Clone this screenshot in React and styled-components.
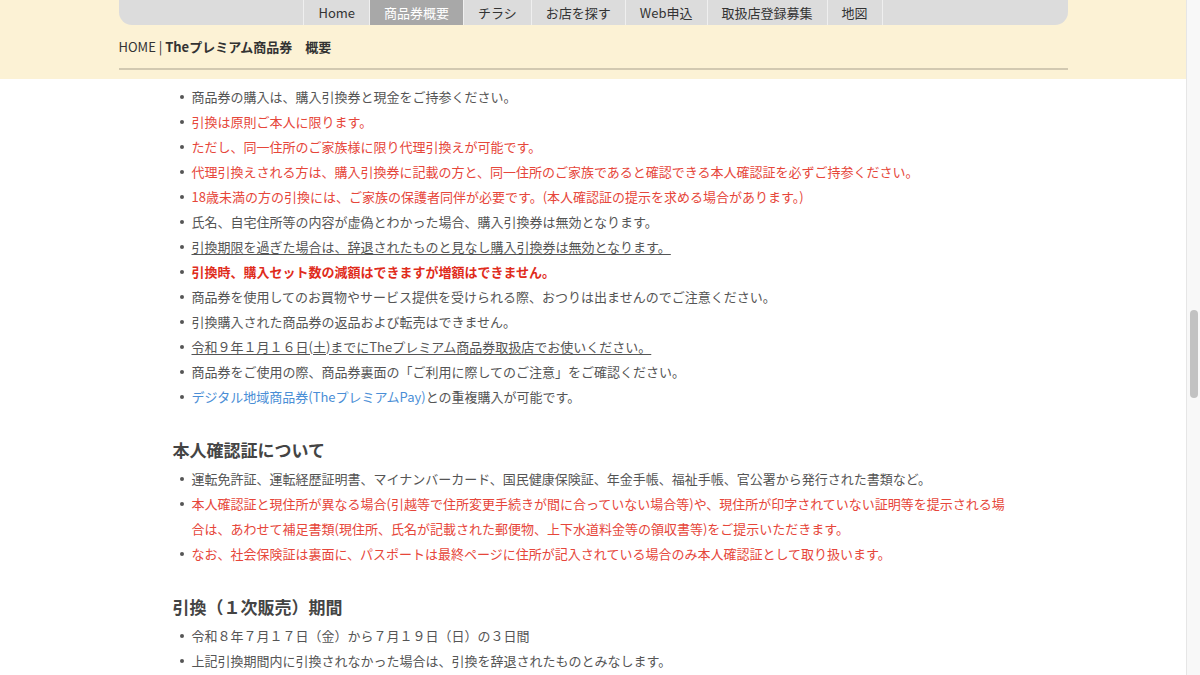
import React from 'react';
import styled, { createGlobalStyle } from 'styled-components';

const GlobalStyle = createGlobalStyle`
  html, body {
    margin: 0;
    padding: 0;
    background: #ffffff;
    font-family: "Noto Sans CJK JP", "Noto Sans", sans-serif;
  }
`;

// ページ全体: 本文 + スクロールバー
const Page = styled.div`
  display: flex;
  width: 1200px;
  height: 675px;
  overflow: hidden;
`;

const Main = styled.div`
  flex: 1;
  display: flex;
  flex-direction: column;
  min-width: 0;
`;

// 上部の黄色いヘッダー
const Header = styled.header`
  background: #fcf2d5;
  padding-bottom: 9px;
`;

const Inner = styled.div`
  width: 949px;
  margin: 0 auto;
`;

const NavBar = styled.nav`
  display: flex;
  justify-content: center;
  height: 25px;
  background: #dcdcdc;
  border-radius: 0 0 13px 13px;
`;

const NavItem = styled.div`
  display: flex;
  align-items: center;
  padding: 0 14px;
  font-size: 13px;
  color: ${(p) => (p.$active ? '#ffffff' : '#333333')};
  background: ${(p) => (p.$active ? '#a8a8a8' : 'transparent')};
  border-left: 1px solid #efefef;

  &:last-child {
    border-right: 1px solid #efefef;
  }
`;

const Breadcrumb = styled.div`
  margin-top: 9px;
  line-height: 25px;
  font-size: 13px;
  color: #333333;
`;

const Current = styled.span`
  font-weight: 700;
`;

const Rule = styled.div`
  margin-top: 9px;
  height: 2px;
  background: #d2c9b1;
`;

// 本文
const Content = styled.div`
  width: 949px;
  margin: 0 auto;
  padding: 5px 56px 0 54px;
  box-sizing: border-box;
`;

const Heading = styled.h3`
  margin: 28px 0 4px;
  font-size: 17px;
  line-height: 25px;
  font-weight: 700;
  color: #444444;
`;

const List = styled.ul`
  list-style: none;
  margin: 0;
  padding: 0;
`;

const Item = styled.li`
  display: flex;
  font-size: 13px;
  line-height: 25px;
  color: #555555;
`;

const Bullet = styled.span`
  flex: 0 0 19px;
  height: 25px;
  display: flex;
  align-items: center;

  &::before {
    content: '';
    width: 4px;
    height: 4px;
    margin-left: 7px;
    border-radius: 50%;
    background: #555555;
  }
`;

const Text = styled.span`
  flex: 1;
  min-width: 0;
  color: ${(p) => (p.$tone === 'red' ? '#e6463a' : p.$tone === 'strong' ? '#e02c1c' : '#555555')};
  font-weight: ${(p) => (p.$tone === 'strong' ? 700 : 400)};
  text-decoration: ${(p) => (p.$underline ? 'underline' : 'none')};
  text-underline-offset: 2px;
`;

const Link = styled.span`
  color: #4a8ed6;
`;

// スクロールバー
const Scrollbar = styled.div`
  width: 13px;
  background: #f8f8f8;
  border-left: 1px solid #e6e6e6;
  padding-top: 310px;
  display: flex;
  justify-content: center;
`;

const Thumb = styled.div`
  width: 8px;
  height: 88px;
  border-radius: 4px;
  background: #c2c2c2;
`;

const navItems = ['Home', '商品券概要', 'チラシ', 'お店を探す', 'Web申込', '取扱店登録募集', '地図'];

const notes = [
  { text: '商品券の購入は、購入引換券と現金をご持参ください。' },
  { text: '引換は原則ご本人に限ります。', tone: 'red' },
  { text: 'ただし、同一住所のご家族様に限り代理引換えが可能です。', tone: 'red' },
  { text: '代理引換えされる方は、購入引換券に記載の方と、同一住所のご家族であると確認できる本人確認証を必ずご持参ください。', tone: 'red' },
  { text: '18歳未満の方の引換には、ご家族の保護者同伴が必要です。(本人確認証の提示を求める場合があります。)', tone: 'red' },
  { text: '氏名、自宅住所等の内容が虚偽とわかった場合、購入引換券は無効となります。' },
  { text: '引換期限を過ぎた場合は、辞退されたものと見なし購入引換券は無効となります。', underline: true },
  { text: '引換時、購入セット数の減額はできますが増額はできません。', tone: 'strong' },
  { text: '商品券を使用してのお買物やサービス提供を受けられる際、おつりは出ませんのでご注意ください。' },
  { text: '引換購入された商品券の返品および転売はできません。' },
  { text: '令和９年１月１６日(土)までにTheプレミアム商品券取扱店でお使いください。', underline: true },
  { text: '商品券をご使用の際、商品券裏面の「ご利用に際してのご注意」をご確認ください。' },
];

const idNotes = [
  { text: '運転免許証、運転経歴証明書、マイナンバーカード、国民健康保険証、年金手帳、福祉手帳、官公署から発行された書類など。' },
  { text: '本人確認証と現住所が異なる場合(引越等で住所変更手続きが間に合っていない場合等)や、現住所が印字されていない証明等を提示される場合は、あわせて補足書類(現住所、氏名が記載された郵便物、上下水道料金等の領収書等)をご提示いただきます。', tone: 'red' },
  { text: 'なお、社会保険証は裏面に、パスポートは最終ページに住所が記入されている場合のみ本人確認証として取り扱います。', tone: 'red' },
];

const periodNotes = [
  { text: '令和８年７月１７日（金）から７月１９日（日）の３日間' },
  { text: '上記引換期間内に引換されなかった場合は、引換を辞退されたものとみなします。' },
];

const Notes = ({ items, children }) => (
  <List>
    {items.map((n, i) => (
      <Item key={i}>
        <Bullet />
        <Text $tone={n.tone} $underline={n.underline}>{n.text}</Text>
      </Item>
    ))}
    {children}
  </List>
);

const App = () => (
  <>
    <GlobalStyle />
    <Page>
      <Main>
        <Header>
          <Inner>
            <NavBar>
              {navItems.map((label) => (
                <NavItem key={label} $active={label === '商品券概要'}>{label}</NavItem>
              ))}
            </NavBar>
            <Breadcrumb>
              HOME | <Current>Theプレミアム商品券　概要</Current>
            </Breadcrumb>
            <Rule />
          </Inner>
        </Header>
        <Content>
          <Notes items={notes}>
            <Item>
              <Bullet />
              <Text>
                <Link>デジタル地域商品券(TheプレミアムPay)</Link>との重複購入が可能です。
              </Text>
            </Item>
          </Notes>

          <Heading>本人確認証について</Heading>
          <Notes items={idNotes} />

          <Heading>引換（１次販売）期間</Heading>
          <Notes items={periodNotes} />
        </Content>
      </Main>
      <Scrollbar>
        <Thumb />
      </Scrollbar>
    </Page>
  </>
);

export default App;
